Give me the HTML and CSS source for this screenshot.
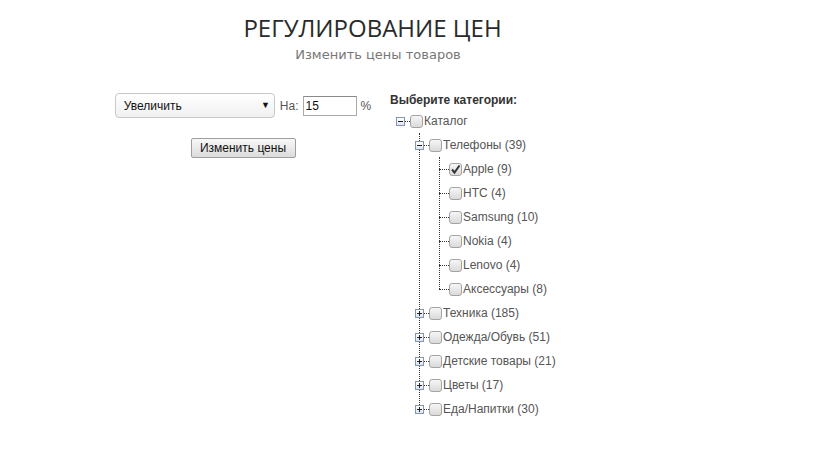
FILE: index.html
```html
<!DOCTYPE html>
<html lang="ru">
<head>
    <meta charset="UTF-8">
    <meta name="viewport" content="width=device-width, initial-scale=1.0">
    <title>Регулирование цен</title>
    <link rel="stylesheet" href="styles.css">
</head>
<body>
    <div class="page">
        <header class="head">
            <h1>РЕГУЛИРОВАНИЕ ЦЕН</h1>
            <p class="sub">Изменить цены товаров</p>
        </header>

        <div class="main">
            <form class="controls" id="price-form">
                <div class="controls-row">
                    <span class="select-wrap">
                        <select id="mode">
                            <option>Увеличить</option>
                            <option>Уменьшить</option>
                        </select>
                    </span>
                    <label for="percent">На:</label>
                    <input type="text" id="percent" value="15">
                    <span class="pct">%</span>
                </div>
                <button type="submit">Изменить цены</button>
            </form>

            <div class="cats">
                <div class="cats-title">Выберите категории:</div>
                <ul class="tree">
                    <li>
                        <div class="node"><span class="exp"></span><span class="dots"></span><span class="cb"></span><span class="label">Каталог</span></div>
                        <ul class="lvl1">
                            <li>
                                <div class="node"><span class="exp"></span><span class="dots"></span><span class="cb"></span><span class="label">Телефоны (39)</span></div>
                                <ul class="lvl2">
                                    <li><div class="node"><span class="conn"></span><span class="cb checked"><svg width="11" height="11" viewBox="0 0 11 11"><path d="M2 5.5 L4.5 8.5 L9.5 1.5" fill="none" stroke="#333" stroke-width="2"/></svg></span><span class="label">Apple (9)</span></div></li>
                                    <li><div class="node"><span class="conn"></span><span class="cb"></span><span class="label">HTC (4)</span></div></li>
                                    <li><div class="node"><span class="conn"></span><span class="cb"></span><span class="label">Samsung (10)</span></div></li>
                                    <li><div class="node"><span class="conn"></span><span class="cb"></span><span class="label">Nokia (4)</span></div></li>
                                    <li><div class="node"><span class="conn"></span><span class="cb"></span><span class="label">Lenovo (4)</span></div></li>
                                    <li><div class="node"><span class="conn"></span><span class="cb"></span><span class="label">Аксессуары (8)</span></div></li>
                                </ul>
                            </li>
                            <li><div class="node"><span class="exp plus"></span><span class="dots"></span><span class="cb"></span><span class="label">Техника (185)</span></div></li>
                            <li><div class="node"><span class="exp plus"></span><span class="dots"></span><span class="cb"></span><span class="label">Одежда/Обувь (51)</span></div></li>
                            <li><div class="node"><span class="exp plus"></span><span class="dots"></span><span class="cb"></span><span class="label">Детские товары (21)</span></div></li>
                            <li><div class="node"><span class="exp plus"></span><span class="dots"></span><span class="cb"></span><span class="label">Цветы (17)</span></div></li>
                            <li><div class="node"><span class="exp plus"></span><span class="dots"></span><span class="cb"></span><span class="label">Еда/Напитки (30)</span></div></li>
                        </ul>
                    </li>
                </ul>
            </div>
        </div>
    </div>
</body>
</html>
```

FILE: styles.css
```css
body {
    margin: 0;
    background: #fff;
    font-family: "Liberation Sans", Arial, sans-serif;
    font-size: 12px;
    color: #333;
}
.page {
    width: 745px;
}
.head {
    padding-top: 12px;
    text-align: center;
}
.head h1 {
    margin: 0;
    font-family: "Open Sans", sans-serif;
    font-weight: normal;
    font-size: 24px;
    line-height: 32px;
    color: #2a2a2a;
}
.sub {
    margin: 3px 0 0;
    padding-left: 11px;
    font-family: "DejaVu Sans", Verdana, sans-serif;
    font-size: 13px;
    line-height: 16px;
    color: #777;
}
.main {
    display: flex;
    align-items: flex-start;
    margin-top: 29px;
    padding-left: 96px;
}
.controls {
    width: 294px;
    padding-top: 1px;
    display: flex;
    flex-direction: column;
    align-items: center;
}
.controls-row {
    display: flex;
    align-items: center;
    color: #555;
}
.select-wrap {
    position: relative;
    display: block;
}
.select-wrap::after {
    content: "\25BC";
    position: absolute;
    right: 5px;
    top: 7px;
    font-size: 9px;
    color: #111;
    pointer-events: none;
}
select {
    appearance: none;
    -webkit-appearance: none;
    display: block;
    width: 160px;
    height: 25px;
    padding: 0 8px;
    font-family: inherit;
    font-size: 12px;
    color: #111;
    border: 1px solid #c8c8c8;
    border-radius: 4px;
    background: linear-gradient(#fff, #f0f0f0);
}
label {
    margin-left: 5px;
}
input[type="text"] {
    width: 54px;
    height: 20px;
    box-sizing: border-box;
    margin-left: 4px;
    padding: 0 2px;
    font-family: inherit;
    font-size: 12px;
    color: #111;
    border: 1px solid #a9a9a9;
    border-top-color: #8a8a8a;
}
.pct {
    margin-left: 4px;
}
button {
    margin-top: 20px;
    width: 105px;
    height: 20px;
    padding: 0;
    font-family: inherit;
    font-size: 12px;
    color: #111;
    border: 1px solid #9f9f9f;
    border-radius: 2px;
    background: linear-gradient(#f8f8f8, #dcdcdc);
    cursor: pointer;
}
.cats-title {
    font-weight: bold;
    line-height: 17px;
    color: #333;
}
.tree, .tree ul {
    list-style: none;
    margin: 0;
    padding: 0;
}
.tree {
    padding-left: 6px;
}
.tree .lvl1 {
    position: relative;
    padding-left: 19px;
}
.tree .lvl1::before {
    content: "";
    position: absolute;
    left: 23px;
    top: 0;
    bottom: 16px;
    border-left: 1px dotted #333;
}
.tree .lvl2 {
    position: relative;
    padding-left: 24px;
}
.tree .lvl2::before {
    content: "";
    position: absolute;
    left: 24px;
    top: 0;
    bottom: 12px;
    border-left: 1px dotted #333;
}
.node {
    display: flex;
    align-items: center;
    height: 24px;
    color: #555;
}
.exp {
    position: relative;
    z-index: 1;
    width: 9px;
    height: 9px;
    box-sizing: border-box;
    border: 1px solid #8497b2;
    background: linear-gradient(#fff, #dfe5ee);
}
.exp::before {
    content: "";
    position: absolute;
    left: 1px;
    top: 3px;
    width: 5px;
    height: 1px;
    background: #222;
}
.exp.plus::after {
    content: "";
    position: absolute;
    left: 3px;
    top: 1px;
    width: 1px;
    height: 5px;
    background: #222;
}
.dots {
    width: 5px;
    border-top: 1px dotted #333;
}
.conn {
    width: 10px;
    border-top: 1px dotted #333;
}
.cb {
    display: flex;
    align-items: center;
    justify-content: center;
    width: 13px;
    height: 13px;
    box-sizing: border-box;
    border: 1px solid #a3a3a3;
    border-radius: 3px;
    background: linear-gradient(#f6f6f6, #dadada);
}
.label {
    margin-left: 1px;
}
```
